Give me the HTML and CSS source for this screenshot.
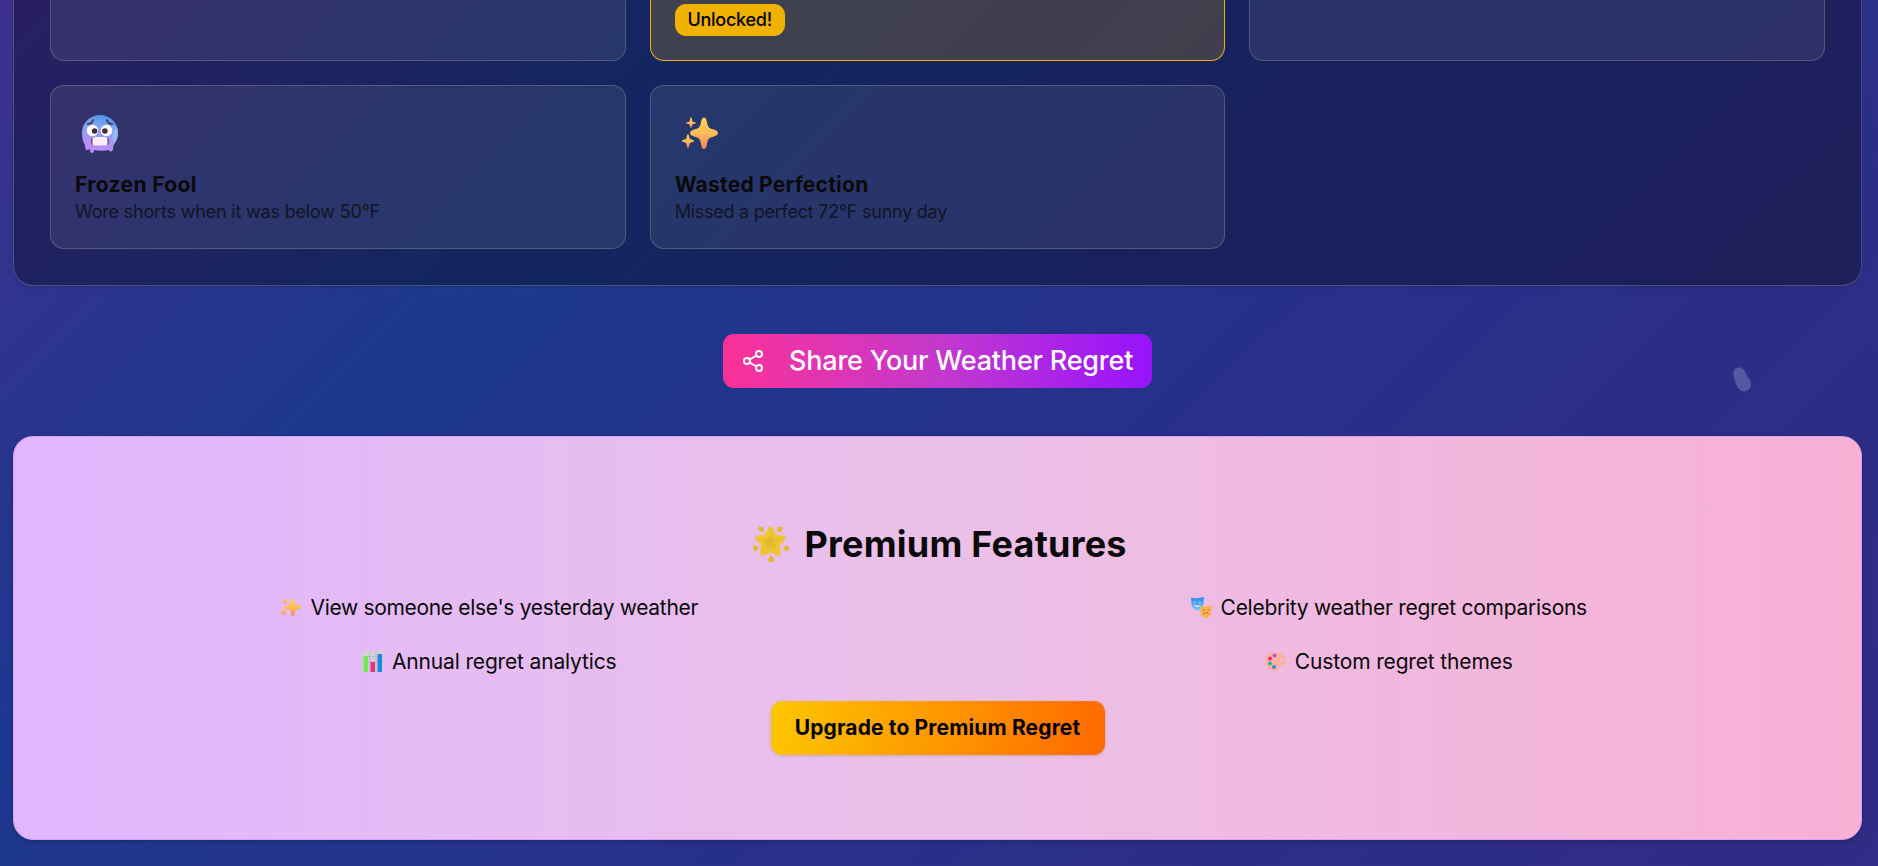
FILE: index.html
```html
<!DOCTYPE html>
<html lang="en">
<head>
<meta charset="utf-8">
<title>Weather Regret</title>
<link rel="stylesheet" href="styles.css">
</head>
<body>
<svg class="defs" aria-hidden="true">
  <defs>
    <linearGradient id="gold" x1="0" y1="0" x2="0" y2="1"><stop offset="0" stop-color="#ffd154"/><stop offset=".55" stop-color="#ffb85a"/><stop offset="1" stop-color="#ff7c6c"/></linearGradient>
    <linearGradient id="ice" x1=".6" y1="0" x2=".4" y2="1"><stop offset="0" stop-color="#4c94ea"/><stop offset=".35" stop-color="#86a8f2"/><stop offset=".7" stop-color="#ae91f2"/><stop offset="1" stop-color="#c58df8"/></linearGradient>
    <radialGradient id="star"><stop offset="0" stop-color="#dbb62d"/><stop offset=".7" stop-color="#edc22f"/><stop offset="1" stop-color="#f8d435"/></radialGradient>
    <linearGradient id="mask-blue" x1="0" y1="0" x2="0" y2="1"><stop offset="0" stop-color="#2d86ef"/><stop offset="1" stop-color="#77c8ff"/></linearGradient>
    <symbol id="sparkles" viewBox="0 0 36 33">
      <g fill="url(#gold)">
        <path d="M22 .5c2 0 2.600 2.500 3.200 5.500 1 4.500 2 5.200 6 6.300 3 .8 4.800 1.700 4.800 3.700s-1.800 2.900-4.800 3.700c-4 1.100-5 1.800-6 6.300-.6 3-1.200 6-3.200 6s-2.600-3-3.200-6c-1-4.500-2-5.200-6-6.300-3-.8-4.800-1.700-4.800-3.700s1.800-2.900 4.800-3.700c4-1.100 5-1.800 6-6.300.6-3 1.200-5.500 3.200-5.500z"/>
        <path d="M9 0c.8 0 1 4 1.800 4.700.8.600 3.200.4 3.200 1.300s-2.400.7-3.200 1.300C10 8 9.800 11 9 11s-1-3-1.800-3.700C6.400 6.700 4 6.900 4 6s2.400-.7 3.200-1.300C8 4 8.200 0 9 0z"/>
        <path d="M6 17c1 0 1.300 4.400 2.100 5.100.9.700 3.900.7 3.900 1.900s-3 1.200-3.900 1.900C7.300 26.600 7 31 6 31s-1.300-4.400-2.100-5.100C3 25.200 0 25.200 0 24s3-1.200 3.900-1.900C4.700 21.400 5 17 6 17z"/>
      </g>
    </symbol>
  </defs>
</svg>
<main class="page">
  <section class="panel">
    <div class="badges">
      <article class="card card-top"></article>
      <article class="card card-top card-unlocked"><span class="tag"><span class="t-tag">Unlocked!</span></span></article>
      <article class="card card-top"></article>
      <article class="card">
        <svg class="badge-icon" viewBox="0 0 36 38">
          <path d="M18 0C8 0 0 8 0 18c0 5 1 9 3 12 0 4 1 5 2 5s2-.500 3-1c0 3 1 4 2 4s2-1 2-3c5 1 10 1 15 0 0 2 4 2 4-1 0-2 1-4 1-5 3-3 4-7 4-11C36 8 28 0 18 0z" fill="url(#ice)"/>
          <path d="M35 12c2 6 1 12-3 17-3-8-2-12 3-17z" fill="#9fc7f8" opacity=".6"/>
          <circle cx="10.500" cy="15.500" r="5.700" fill="#fff"/><circle cx="24.500" cy="15.500" r="5.700" fill="#fff"/>
          <circle cx="12.600" cy="16" r="2.800" fill="#432c3c"/><circle cx="22.900" cy="16" r="2.800" fill="#432c3c"/>
          <path d="M5.500 9c3 0 5-1.500 5.500-4M30.500 9c-3 0-5-1.500-5.500-4" fill="none" stroke="#46374f" stroke-width="1.700" stroke-linecap="round"/>
          <rect x="9" y="22.500" width="18" height="7.500" rx="3" fill="#63486f"/><rect x="10.500" y="22" width="15" height="8.500" rx="2.500" fill="#fceaff"/>
        </svg>
        <h3><span class="t-frozen">Frozen Fool</span></h3>
        <p><span class="t-shorts">Wore shorts when it was below 50°F</span></p>
      </article>
      <article class="card">
        <svg class="badge-icon badge-sparkles"><use href="#sparkles"/></svg>
        <h3><span class="t-wasted">Wasted Perfection</span></h3>
        <p><span class="t-missed">Missed a perfect 72°F sunny day</span></p>
      </article>
    </div>
  </section>

  <button class="share">
    <svg class="share-icon" viewBox="0 0 24 24" fill="none" stroke="currentColor" stroke-width="2" stroke-linecap="round" stroke-linejoin="round"><circle cx="18" cy="5" r="3"/><circle cx="6" cy="12" r="3"/><circle cx="18" cy="19" r="3"/><path d="M8.590 13.510l6.830 3.980M15.410 6.510l-6.820 3.980"/></svg>
    <span class="t-share">Share Your Weather Regret</span>
  </button>

  <section class="premium">
    <h2>
      <svg class="star-icon" viewBox="0 0 36 36">
        <path d="M17.500 2.800l4.100 7.700 8.900 1.700-6.200 6.400 1.300 9-8.100-3.700-8.100 3.700 1.200-9L4.500 12.200 13.400 10.500z" fill="url(#star)" stroke="#eec42f" stroke-width="4.400" stroke-linejoin="round"/>
        <path d="M6 1.500l3.800.5v3.500L7 4.500zM29 1.500l-3.800.5v3.500L28 4.500zM1 20.500l4 .5-2.500 3.500L1 23.500zM35 20.500l-4 .5 2.500 3.500 1.500-1zM18 30.500l2.500 3.500-1 1.200h-3L15.500 34z" fill="#e3b928" stroke="#e3b928" stroke-width="1.600" stroke-linejoin="round"/>
      </svg>
      <span class="t-premium">Premium Features</span>
    </h2>
    <div class="features">
      <div class="feature"><svg class="mini"><use href="#sparkles"/></svg><span class="t-view">View someone else's yesterday weather</span></div>
      <div class="feature"><svg class="mini" viewBox="0 0 21 21">
        <path d="M0 .500q6 1.500 13-.500l-.5 7.500Q10 13.500 6.500 13.500 1 12 .500 7z" fill="url(#mask-blue)"/>
        <path d="M9.500 9.300q6 1 11.500-1.300L20 16q-1.500 5-5.500 5-4-.5-5-5z" fill="#ffb34d"/>
        <path d="M2.500 8c2 2.800 5.500 2.800 7 0-2 1-4.500 1-7 0z" fill="#eef6ff"/><path d="M2.500 5.500q1-1 2.200 0M7.500 5.500q1-1 2.200 0" fill="none" stroke="#d8ecff" stroke-width=".7"/>
        <path d="M12 18c1-3 5-3 6-.5M12 13h2M16.500 12.800h2" fill="none" stroke="#d86a2e" stroke-width="1"/>
      </svg><span class="t-celebrity">Celebrity weather regret comparisons</span></div>
      <div class="feature"><svg class="mini" viewBox="0 0 21 21">
        <rect width="21" height="21" rx="2" fill="#d5cedd"/><path d="M0 5.500h21M0 11h21M7.500 0v21M14 0v21" stroke="#b9b0c2" stroke-width=".7"/>
        <path d="M1.500 5H6v16H1.500z" fill="#78e45c"/><path d="M8.500 11H13v10H8.500z" fill="#e0347d"/><path d="M15.500 3H20v18h-4.500z" fill="#2485dc"/>
      </svg><span class="t-annual">Annual regret analytics</span></div>
      <div class="feature"><svg class="mini" viewBox="0 0 21 21">
        <path d="M10 1C4 1 0 5 0 10.500S4 20 10 20c2.500 0 4-1 3.500-3-.5-1.500.5-3 2.500-2.500 3 .5 5-1 5-4.500C21 4.500 16 1 10 1zm6.500 6.200a2 2 0 1 1 0 4 2 2 0 0 1 0-4z" fill="#ffb09e" fill-rule="evenodd"/>
        <circle cx="9.500" cy="4.500" r="1.900" fill="#b04eea"/><circle cx="5" cy="7.500" r="2" fill="#ea2f70"/><circle cx="5" cy="12.500" r="1.900" fill="#1cb5ae"/><circle cx="9" cy="16" r="2" fill="#348de8"/>
      </svg><span class="t-custom">Custom regret themes</span></div>
    </div>
    <button class="upgrade"><span class="t-upgrade">Upgrade to Premium Regret</span></button>
  </section>
  <svg class="drop" viewBox="0 0 18 25"><path d="M5.500.5C9 0 12 3 12.500 6l2 4c5 4 4 10 1 13-4 3-10 1-12-5C1.500 14 .5 10 .300 6 .300 3 3 .8 5.500.5z" fill="#fff" opacity=".2"/></svg>
</main>
</body>
</html>
```
FILE: styles.css
```css
* { box-sizing: border-box; }
body {
  margin: 0;
  font-family: Inter, "Liberation Sans", sans-serif;
  color: #0a0a0a;
}
.defs { position: absolute; width: 0; height: 0; }
.page {
  position: relative;
  height: 866px;
  padding: 0 16px 0 13px;
  display: flex;
  flex-direction: column;
  align-items: center;
  overflow: hidden;
  background: linear-gradient(135deg, #3d2f90 0, #1c398e 530px, #27318a 1070px, #2d2e86 1527px, #312c85 1940px);
}
h2, h3, p { margin: 0; }
button { border: 0; padding: 0; font-family: inherit; }
svg { flex: none; }
span { white-space: nowrap; }
.panel {
  width: 100%;
  height: 286px;
  padding: 0 36px 36px;
  border: 1px solid rgba(255, 255, 255, .2);
  border-top: 0;
  border-radius: 0 0 20px 20px;
  background: rgba(0, 0, 0, .32);
  box-shadow: 0 1px 3px rgba(0, 0, 0, .15);
}
.badges {
  display: grid;
  grid-template-columns: repeat(3, 1fr);
  grid-template-rows: 61px 164px;
  gap: 24px;
}
.card {
  padding: 29px 24px 0;
  border: 1px solid rgba(255, 240, 150, .2);
  border-radius: 14px;
  background: rgba(255, 255, 255, .08);
}
.card-top {
  padding-top: 4px;
  border-top: 0;
  border-radius: 0 0 14px 14px;
}
.card-unlocked { border-color: #f0b100; background: rgba(240, 177, 10, .2); }
.tag {
  display: flex;
  justify-content: center;
  align-items: center;
  width: 110px;
  height: 32px;
  padding-bottom: 1px;
  border-radius: 11px;
  background: #f0b100;
  color: #000;
  font-size: 18px;
  font-weight: 500;
}
.badge-icon { display: block; width: 36px; height: 38px; margin-left: 7px; }
.badge-sparkles { height: 33px; margin: 2px 0 21px 7px; }
.card h3 { margin-top: 18px; font-size: 21px; line-height: 28px; font-weight: 700; }
.card p { margin-top: -1px; font-size: 18px; line-height: 27px; opacity: .75; }
.share {
  display: flex;
  align-items: center;
  width: 429px;
  height: 54px;
  margin-top: 48px;
  padding-left: 18px;
  border-radius: 11px;
  background: linear-gradient(90deg, #fb3197, #c238cf 52%, #9713fc);
  color: #fff;
  font-size: 27px;
  font-weight: 500;
}
.share-icon { width: 24px; height: 24px; margin-right: 24px; }
.t-share { padding-bottom: 2px; }
.premium {
  display: flex;
  flex-direction: column;
  align-items: center;
  width: 100%;
  height: 404px;
  margin-top: 48px;
  padding: 84px 36px 0;
  border: 1px solid #d9a0f8;
  border-radius: 20px;
  background: linear-gradient(90deg, #e0b7ff, #ebc0e8 50%, #f8b0d5);
  box-shadow: 0 1px 4px rgba(0, 0, 0, .25);
}
.premium h2 {
  display: flex;
  align-items: center;
  gap: 16px;
  width: 370px;
  height: 48px;
  padding-bottom: 2px;
  font-size: 36px;
  font-weight: 700;
}
.star-icon { width: 36px; height: 36px; }
.features {
  display: grid;
  grid-template-columns: 1fr 1fr;
  grid-template-rows: 30px 30px;
  gap: 24px;
  width: 100%;
  margin-top: 24px;
}
.feature { display: flex; justify-content: center; align-items: center; gap: 9px; padding: 0 0 1px 3px; font-size: 21px; }
.mini { width: 21px; height: 21px; }
.upgrade {
  width: 334px;
  height: 54px;
  margin-top: 24px;
  padding-bottom: 2px;
  border-radius: 11px;
  background: linear-gradient(100deg, #fdc700, #ff6900);
  color: #000;
  box-shadow: 0 1px 3px rgba(0, 0, 0, .15);
  font-size: 21px;
  font-weight: 700;
}
.drop { position: absolute; left: 1733px; top: 367px; width: 18px; height: 25px; }

/* per-label tracking */
.t-tag { letter-spacing: -.25px; }
.t-frozen { letter-spacing: .37px; }
.t-wasted { letter-spacing: .24px; }
.t-shorts { letter-spacing: -.19px; }
.t-missed { letter-spacing: -.25px; }
.t-share { letter-spacing: -.21px; }
.t-premium { letter-spacing: .22px; }
.t-view { letter-spacing: -.32px; }
.t-celebrity { letter-spacing: -.27px; }
.t-annual { letter-spacing: -.16px; }
.t-custom { letter-spacing: -.15px; }
.t-upgrade { letter-spacing: .14px; }
```
